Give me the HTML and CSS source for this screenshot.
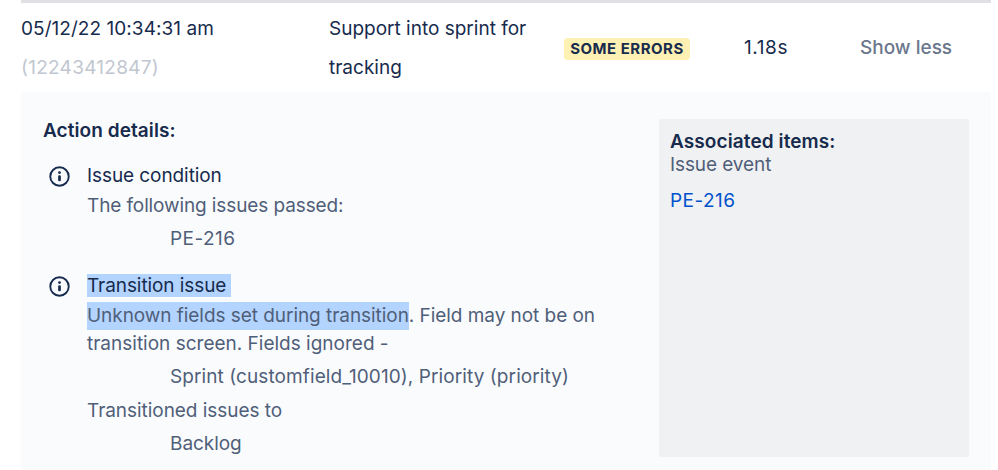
FILE: index.html
```html
<!DOCTYPE html>
<html lang="en">
<head>
<meta charset="utf-8">
<title>Audit log</title>
<link rel="stylesheet" href="styles.css">
</head>
<body>
<main class="log">
  <div class="row">
    <div class="date"><span>05/12/22 10:34:31 am</span><br><span class="id">(12243412847)</span></div>
    <div class="rule"><span class="rule-name">Support into sprint for</span><br><span>tracking</span></div>
    <div class="status"><span class="badge">SOME ERRORS</span></div>
    <div class="duration">1.18s</div>
    <div class="toggle">Show less</div>
  </div>
  <div class="details">
    <section class="actions">
      <h2 class="heading">Action details:</h2>
      <article class="action">
        <svg class="icon" viewBox="0 0 20 20"><circle cx="10" cy="10" r="8.8"/><circle class="fill" cx="10" cy="6.3" r="1.35"/><rect class="fill" x="8.7" y="8.8" width="2.6" height="5.7" rx="1.2"/></svg>
        <div class="body">
          <h3 class="title">Issue condition</h3>
          <p class="line intro">The following issues passed:</p>
          <p class="line value"><span class="key">PE-216</span></p>
        </div>
      </article>
      <article class="action">
        <svg class="icon" viewBox="0 0 20 20"><circle cx="10" cy="10" r="8.8"/><circle class="fill" cx="10" cy="6.3" r="1.35"/><rect class="fill" x="8.7" y="8.8" width="2.6" height="5.7" rx="1.2"/></svg>
        <div class="body">
          <h3 class="title"><span class="selected heading-selection">Transition issue</span></h3>
          <p class="line"><span class="selected">Unknown fields set during transition</span>. Field may not be on<br><span class="continued">transition screen. Fields ignored -</span></p>
          <p class="line value fields">Sprint (customfield_10010), Priority (priority)</p>
          <p class="line">Transitioned issues to</p>
          <p class="line value">Backlog</p>
        </div>
      </article>
    </section>
    <aside class="items">
      <h2 class="items-heading">Associated items:</h2>
      <p class="event">Issue event</p>
      <a class="link key">PE-216</a>
    </aside>
  </div>
</main>
</body>
</html>
```
FILE: styles.css
```css
* { box-sizing: border-box; }
body {
  margin: 0;
  background: #fff;
  color: #172b4d;
  font-family: Inter, "Liberation Sans", sans-serif;
  font-size: 19px;
  white-space: nowrap;
}
h2, h3, p { margin: 0; font-size: inherit; }
.log {
  width: 970px;
  height: 470px;
  margin-left: 21px;
  border-top: 3px solid #dfe1e6;
}
.row {
  display: grid;
  grid-template-columns: 308px 235px 180px 116px 1fr;
  align-items: center;
  height: 89px;
  line-height: 39px;
}
.date, .rule { padding-top: 1px; }
.date { letter-spacing: 0.05px; }
.id { color: #c1c7d0; letter-spacing: 0.27px; }
.status, .badge { display: flex; align-items: center; }
.status { padding-top: 3px; }
.badge {
  width: 126px;
  height: 22px;
  padding-bottom: 1px;
  justify-content: center;
  border-radius: 4px;
  background: #fff0b3;
  font-size: 15px;
  font-weight: 700;
  letter-spacing: 0.5px;
}
.duration { letter-spacing: 0.6px; }
.toggle { color: #6b778c; font-weight: 500; }
.details {
  display: flex;
  justify-content: space-between;
  height: 378px;
  padding: 27px 22px 13px;
  background: #fafbfd;
}
.heading { padding-top: 1px; font-weight: 600; line-height: 22px; letter-spacing: 0.07px; }
.actions { width: 590px; }
.action {
  display: flex;
  gap: 17px;
  padding-left: 6px;
  margin-top: 22px;
}
.action + .action { margin-top: 20.6px; }
.icon {
  width: 21px;
  height: 21px;
  margin-top: 2px;
  fill: none;
  stroke: #172b4d;
  stroke-width: 1.8;
}
.icon .fill { fill: #172b4d; stroke: none; }
.title { font-weight: 400; line-height: 23px; letter-spacing: -0.08px; }
.line { color: #505f79; line-height: 28px; margin-top: 5.2px; letter-spacing: -0.05px; }
.intro { letter-spacing: -0.11px; }
.continued { letter-spacing: 0; }
.value { padding-left: 83px; }
.key { letter-spacing: 0.45px; }
.fields { letter-spacing: 0.09px; }
.selected { display: inline-block; background: #b3d4ff; }
.heading-selection { padding-right: 5px; }
.items {
  width: 310px;
  padding: 12px 11px;
  background: #f0f1f3;
  line-height: 22px;
}
.items-heading { font-weight: 600; letter-spacing: 0.1px; }
.event { padding-top: 1px; color: #505f79; margin-bottom: 14px; letter-spacing: -0.1px; }
.link { color: #0052cc; }
```
